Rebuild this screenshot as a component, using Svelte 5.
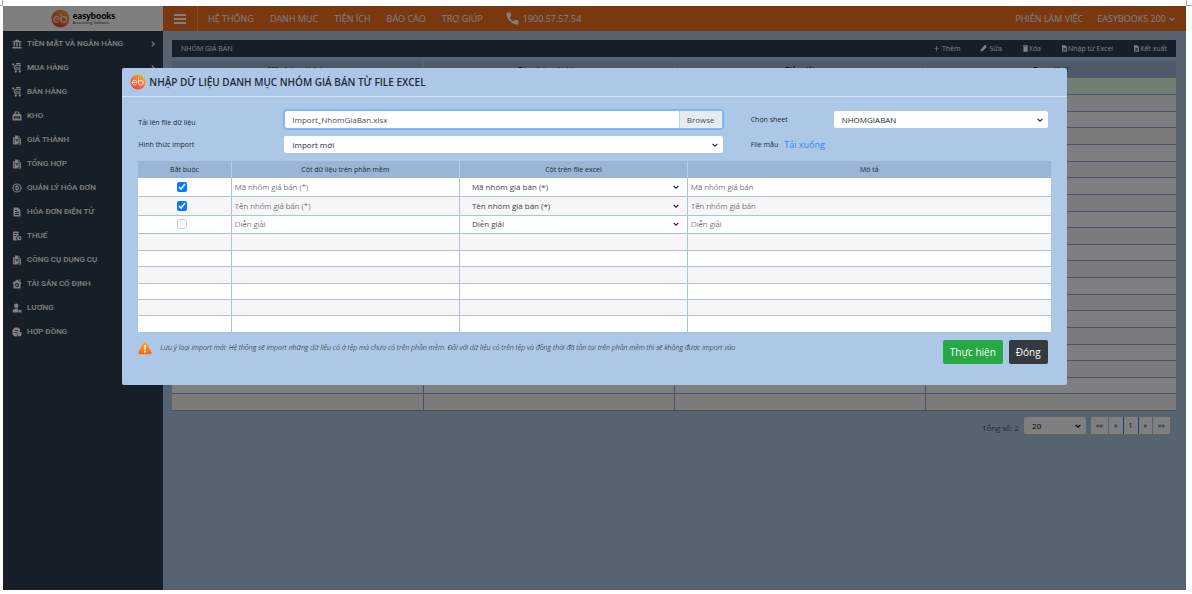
<script>
  const menus = ['HỆ THỐNG', 'DANH MỤC', 'TIỆN ÍCH', 'BÁO CÁO', 'TRỢ GIÚP'];
  const nav = [
    { label: 'TIỀN MẶT VÀ NGÂN HÀNG', icon: 'bank', more: true },
    { label: 'MUA HÀNG', icon: 'cart', more: true },
    { label: 'BÁN HÀNG', icon: 'cart', more: true },
    { label: 'KHO', icon: 'store', more: true },
    { label: 'GIÁ THÀNH', icon: 'files', more: true },
    { label: 'TỔNG HỢP', icon: 'files', more: true },
    { label: 'QUẢN LÝ HÓA ĐƠN', icon: 'globe', more: true },
    { label: 'HÓA ĐƠN ĐIỆN TỬ', icon: 'doc', more: true },
    { label: 'THUẾ', icon: 'tax', more: true },
    { label: 'CÔNG CỤ DỤNG CỤ', icon: 'files', more: true },
    { label: 'TÀI SẢN CỐ ĐỊNH', icon: 'house', more: true },
    { label: 'LƯƠNG', icon: 'user', more: true },
    { label: 'HỢP ĐỒNG', icon: 'contract', more: true }
  ];
  const tools = [
    { label: 'Thêm', icon: 'plus' },
    { label: 'Sửa', icon: 'pencil' },
    { label: 'Xóa', icon: 'trash' },
    { label: 'Nhập từ Excel', icon: 'sheet' },
    { label: 'Kết xuất', icon: 'sheet' }
  ];
  const listHeads = ['Mã nhóm giá bán', 'Tên nhóm giá bán', 'Diễn giải', 'Trạng thái'];
  const listRows = Array.from({ length: 20 }, (_, i) => i);
  const mapping = [
    { required: true, name: 'Mã nhóm giá bán (*)', note: 'Mã nhóm giá bán' },
    { required: true, name: 'Tên nhóm giá bán (*)', note: 'Tên nhóm giá bán' },
    { required: false, name: 'Diễn giải', note: 'Diễn giải' }
  ];
  const blanks = Array.from({ length: 6 }, (_, i) => i);
  const pages = ['««', '«', '1', '»', '»»'];
</script>

{#snippet logo()}
  <svg class="logo" viewBox="0 0 40 40" aria-hidden="true">
    <defs>
      <linearGradient id="ebg" x1="1" y1="0" x2="0.2" y2="1">
        <stop offset="0" stop-color="#fdc22e" />
        <stop offset="0.5" stop-color="#f8743a" />
        <stop offset="1" stop-color="#ee3a4b" />
      </linearGradient>
    </defs>
    <circle cx="20" cy="20" r="19" fill="url(#ebg)" />
    <g fill="none" stroke="#ffe6da" stroke-width="2.4" stroke-linecap="round">
      <path d="M6 21h11.500a6 6 0 1 0-2 5" />
      <path d="M21 10v13" />
      <circle cx="27" cy="22" r="6" />
    </g>
  </svg>
{/snippet}

{#snippet chevron()}
  <svg class="chev" viewBox="0 0 10 10" aria-hidden="true">
    <path d="M2 3.500 5 6.500 8 3.500" fill="none" stroke="currentColor" stroke-width="1.500" />
  </svg>
{/snippet}

{#snippet icon(name)}
  <svg class="ico" viewBox="0 0 20 20" fill="currentColor" aria-hidden="true">
    {#if name === 'bank'}
      <path d="M10 1 1 5.500V7h18V5.500zM3 8h3v7H3zM8.500 8h3v7h-3zM14 8h3v7h-3zM1 16h18v3H1z" />
    {:else if name === 'cart'}
      <path d="M0 1h4l2.500 10H17v2.500H5L2.500 3.500H0zM6 4h3v2H6zM10 4h3v2h-3zM14 4h4v2h-4zM7 7.500h3v2H7zM11 7.500h6v2h-6zM8 0h9v3H8z" />
      <circle cx="7.500" cy="17" r="2.300" /><circle cx="15.500" cy="17" r="2.300" />
    {:else if name === 'store'}
      <path fill-rule="evenodd" d="M6 1h8l1 4 4 3v11H1V8l4-3zM7.500 3v3h5V3zM4 10v6h12v-6zM5.500 11h9v1.500h-9zM5.500 14h9v1.500h-9z" />
    {:else if name === 'files'}
      <path fill-rule="evenodd" d="M2 4h3v13h6v2H2zM6 1h6v5h3v11H6zM8 8v1.500h5V8zM8 11v1.500h5V11z" />
      <path d="M13 1l4 4h-4zM16 7h2v12h-6v-1h4z" />
    {:else if name === 'globe'}
      <path fill-rule="evenodd" d="M10 1a9 9 0 1 0 0 18 9 9 0 0 0 0-18zm0 2a7 7 0 1 1 0 14 7 7 0 0 1 0-14z" />
      <path d="M9 4h2v2h2.500v2H8v1.200h5.500V14H11v2H9v-2H6.500v-2H12v-1H6.500V6H9z" />
      <path d="M0 9h4v2H0zM16 9h4v2h-4z" />
    {:else if name === 'doc'}
      <path fill-rule="evenodd" d="M3 1h9l5 5v13H3zM6 6h4v2H6zm0 4h8v2H6zm0 4h8v2H6z" />
    {:else if name === 'tax'}
      <path fill-rule="evenodd" d="M2 1h11v8a6 6 0 0 0-3 10H2zM4 4v1.500h7V4zm0 4v1.500h5V8z" />
      <path fill-rule="evenodd" d="M14.500 10a4.500 4.500 0 1 0 0 9 4.500 4.500 0 0 0 0-9zm-.7 2h1.500v2H17v1.500h-3.200z" />
    {:else if name === 'house'}
      <path fill-rule="evenodd" d="M10 1l9 7-1 2h-1v9H3v-9H2L1 8zM10 8a4 4 0 1 0 0 8 4 4 0 0 0 0-8zm0 2a2 2 0 1 1 0 4 2 2 0 0 1 0-4z" />
      <path d="M13 1h4v5z" />
    {:else if name === 'user'}
      <circle cx="8.500" cy="5.500" r="4.500" />
      <path d="M1 19c0-6 3-8 7.500-8 2 0 3.500.4 4.700 1.200L12 15v4zM13 14h6v5h-6z" />
    {:else if name === 'contract'}
      <path fill-rule="evenodd" d="M5 1h8l3 3v4l-5 5v6H5l-4-4V6zM6 6v1.500h6V6zM5 10v1.500h5V10z" />
      <path d="M14 9l5 2v5l-3 3-4-1v-5z" />
    {:else if name === 'plus'}
      <path d="M9 3h2v6h6v2h-6v6H9v-6H3V9h6z" />
    {:else if name === 'pencil'}
      <path d="M13 1h5v6L8 17l-7 2 2-7z" />
    {:else if name === 'trash'}
      <path d="M3 1h14v3H3zM4 5h12v14H4z" />
    {:else if name === 'sheet'}
      <path fill-rule="evenodd" d="M3 1h9l5 5v13H3zM6 8v2l2.500 2.500L6 15v2h2l2-2.500 2 2.500h2v-2l-2.500-2.500L14 10V8h-2l-2 2.500L8 8z" />
    {/if}
  </svg>
{/snippet}

<div class="sheet">
  <div class="marks"><span class="mark left"></span><span class="mark right"></span></div>

  <div class="app">
    <aside class="side">
      <div class="brand">
        {@render logo()}
        <div class="brand-text"><strong>easybooks</strong><small>Accounting Software</small></div>
      </div>
      <nav>
        {#each nav as item}
          <a href="#nav">
            {@render icon(item.icon)}
            <span>{item.label}</span>
            {#if item.more}
              <svg class="more" viewBox="0 0 10 10" aria-hidden="true">
                <path d="M3 1l4 4-4 4" fill="none" stroke="currentColor" stroke-width="2" />
              </svg>
            {/if}
          </a>
        {/each}
      </nav>
    </aside>

    <div class="main">
      <header class="top">
        <button class="burger" aria-label="Menu"><i></i><i></i><i></i></button>
        <nav class="menus">
          {#each menus as m}<a href="#menu">{m}</a>{/each}
        </nav>
        <a class="phone" href="#phone">
          <svg viewBox="0 0 24 24" fill="currentColor" aria-hidden="true">
            <path d="M5 1h2.500c.8 0 1.200.5 1.300 1.200.1 1.600.4 3 .8 4.300.2.600 0 1-.4 1.400L6.500 10.600a17 17 0 0 0 7 7l2.600-2.700c.4-.4.9-.5 1.400-.3 1.300.4 2.700.7 4.200.8.700 0 1.200.5 1.200 1.300v5c0 .8-.5 1.300-1.300 1.300C10.500 23 1 13.500 1 2.300 1 1.500 1.500 1 2.300 1z" />
          </svg>
          1900.57.57.54
        </a>
        <div class="session">
          <a href="#session">PHIÊN LÀM VIỆC</a>
          <a href="#account">EASYBOOKS 200 {@render chevron()}</a>
        </div>
      </header>

      <section class="content">
        <div class="toolbar">
          <h1>NHÓM GIÁ BÁN</h1>
          <div class="tools">
            {#each tools as t}
              <button class:spaced={t.icon === 'plus' || t.icon === 'pencil'}>{@render icon(t.icon)}{t.label}</button>
            {/each}
          </div>
        </div>

        <table class="list">
          <thead><tr>{#each listHeads as h}<th>{h}</th>{/each}</tr></thead>
          <tbody>
            {#each listRows as r}
              <tr>{#each listHeads as h}<td></td>{/each}</tr>
            {/each}
          </tbody>
        </table>

        <div class="pager">
          <label for="size">Tổng số: 2</label>
          <div class="pick size">
            <select id="size"><option>20</option></select>
            {@render chevron()}
          </div>
          <div class="pages">
            {#each pages as p}<button>{p}</button>{/each}
          </div>
        </div>
      </section>
    </div>

    <div class="backdrop">
      <div class="modal" role="dialog" aria-labelledby="title">
        <div class="modal-head">
          {@render logo()}
          <h2 id="title">NHẬP DỮ LIỆU DANH MỤC NHÓM GIÁ BÁN TỪ FILE EXCEL</h2>
        </div>

        <div class="modal-body">
          <div class="form">
            <label class="low" for="file">Tải lên file dữ liệu</label>
            <div class="file">
              <input id="file" type="text" readonly value="Import_NhomGiaBan.xlsx" />
              <button>Browse</button>
            </div>
            <label class="second" for="sheet">Chọn sheet</label>
            <div class="pick">
              <select id="sheet"><option>NHOMGIABAN</option></select>
              {@render chevron()}
            </div>

            <label for="mode">Hình thức import</label>
            <div class="pick">
              <select id="mode"><option>Import mới</option></select>
              {@render chevron()}
            </div>
            <div class="second sample"><span>File mẫu</span><a href="#download">Tải xuống</a></div>
          </div>

          <table class="map">
            <thead>
              <tr>
                <th class="c-req">Bắt buộc</th>
                <th class="c-col">Cột dữ liệu trên phần mềm</th>
                <th class="c-col">Cột trên file excel</th>
                <th>Mô tả</th>
              </tr>
            </thead>
            <tbody>
              {#each mapping as m}
                <tr class="filled">
                  <td class="check"><input type="checkbox" aria-label={m.name} checked={m.required} disabled={!m.required} /></td>
                  <td>{m.name}</td>
                  <td class="cell-pick">
                    <div class="pick plain">
                      <select aria-label={m.note}><option>{m.name}</option></select>
                      {@render chevron()}
                    </div>
                  </td>
                  <td>{m.note}</td>
                </tr>
              {/each}
              {#each blanks as b}
                <tr class="blank"><td></td><td></td><td></td><td></td></tr>
              {/each}
            </tbody>
          </table>

          <div class="foot">
            <svg class="warn" viewBox="0 0 28 28" aria-hidden="true">
              <defs>
                <linearGradient id="wg" x1="0" y1="0" x2="0" y2="1">
                  <stop offset="0" stop-color="#ffae2b" />
                  <stop offset="1" stop-color="#f4650e" />
                </linearGradient>
              </defs>
              <path d="M14 1.500c1.300 0 2.200.8 3 2.200l9.700 18.300c1.300 2.600.3 4.500-2.700 4.500H4c-3 0-4-1.900-2.700-4.500L11 3.700c.8-1.400 1.700-2.200 3-2.200z" fill="url(#wg)" />
              <path d="M12.200 8h3.600l-.6 10h-2.400z" fill="#fff" />
              <circle cx="14" cy="21.500" r="1.900" fill="#fff" />
            </svg>
            <p>Lưu ý loại import mới: Hệ thống sẽ import những dữ liệu có ở tệp mà chưa có trên phần mềm. Đối với dữ liệu có trên tệp và đồng thời đã tồn tại trên phần mềm thì sẽ không được import vào</p>
            <div class="actions">
              <button class="go">Thực hiện</button>
              <button class="close">Đóng</button>
            </div>
          </div>
        </div>
      </div>
    </div>
  </div>
</div>

<style>
  :global(body) { background: #fff; }
  * { box-sizing: border-box; }
  .sheet {
    display: flex;
    flex-direction: column;
    min-height: 100vh;
    padding-bottom: 4px;
    font: 9px/12px "Open Sans", "Noto Sans", sans-serif;
  }
  a { color: inherit; text-decoration: none; }
  button, input, select { font: inherit; color: inherit; margin: 0; border: 0; padding: 0; }
  button { background: none; cursor: pointer; }
  h1, h2, p { margin: 0; font: inherit; }
  svg { display: block; flex: none; }

  .marks { display: flex; justify-content: space-between; height: 6px; }
  .mark { height: 6px; border-bottom: 1px solid #a6a6a6; }
  .mark.left { width: 3px; border-right: 1px solid #a6a6a6; }
  .mark.right { width: 6px; border-left: 1px solid #a6a6a6; }

  .app { position: relative; flex: 1; display: flex; margin: 0 6px 0 3px; background: #b0c6e4; }

  .side { width: 160px; flex: none; background: #2c3c4e; color: #fff; }
  .brand { display: flex; align-items: center; justify-content: center; gap: 3px; height: 25px; background: #fff; color: #000; }
  .logo { width: 19px; height: 19px; }
  .brand-text { display: flex; flex-direction: column; font-family: Lato, sans-serif; }
  .brand-text strong { font-size: 9px; line-height: 9px; font-weight: 900; }
  .brand-text small { font-size: 4px; line-height: 6px; color: #444; }
  .side nav { padding-top: 1px; }
  .side nav a {
    display: flex;
    align-items: center;
    gap: 5px;
    height: 24px;
    padding: 0 7px 0 9px;
    font: 500 8px/12px Roboto, sans-serif;
  }
  .side nav span { flex: 1; }
  .ico { width: 10px; height: 10px; }
  .more { width: 6px; height: 6px; }

  .main { flex: 1; min-width: 0; }
  .top { display: flex; align-items: center; height: 25px; background: #f47020; color: #fff; }
  .burger { display: flex; flex-direction: column; gap: 2px; padding: 0 11px; height: 25px; justify-content: center; border-right: 1px solid #f99a5c; }
  .burger i { width: 12px; height: 2px; background: #fff; }
  .menus { display: flex; gap: 16px; padding: 0 23px 0 10px; }
  .phone { display: flex; align-items: center; gap: 4px; }
  .phone svg { width: 13px; height: 13px; }
  .session { display: flex; gap: 14px; margin-left: auto; padding-right: 10px; }
  .session a { display: flex; align-items: center; gap: 2px; }
  .chev { width: 8px; height: 8px; }

  .content { padding: 9px 10px 0 9px; }
  .toolbar { display: flex; align-items: center; justify-content: space-between; height: 17px; margin-bottom: 4px; padding: 0 9px; background: #2c3c4e; color: #fff; font-size: 7px; }
  .tools { display: flex; gap: 20px; }
  .tools button { display: flex; align-items: center; }
  .tools button.spaced { gap: 2px; }
  .tools .ico { width: 7px; height: 7px; }

  table { width: 100%; table-layout: fixed; border-collapse: collapse; }
  th, td { padding: 0; }
  .list { height: 350px; }
  .list tr { height: 16px; }
  .list th { height: 17px; background: #9ab5d4; font-size: 7px; font-weight: 600; line-height: 10px; border-right: 1px solid #abc7e6; }
  .list td { border: 1px solid #8aa6cc; border-width: 0 1px 1px 0; }
  .list th:last-child, .list td:last-child { border-right: 0; }
  .list tbody tr { background: #fff; }
  .list tbody tr:nth-child(even) { background: #f6f6f6; }
  .list tbody tr:first-child { background: #dffee4; }

  .pager { display: flex; align-items: flex-end; justify-content: flex-end; gap: 5px; margin-top: 6px; padding-right: 6px; font-size: 8px; }
  .pager label { font-weight: 300; }
  .size { width: 62px; }
  .pages { display: flex; gap: 1px; background: #b0c6e4; }
  .pages button { padding: 0 5px; height: 17px; background: #fff; font-size: 7px; }
  .pages button:nth-child(3) { box-shadow: -1px 0 #2a7fe8, 1px 0 #2a7fe8; }

  .pick { display: grid; align-items: center; height: 17px; }
  .pick select {
    grid-area: 1 / 1;
    width: 100%;
    height: 17px;
    padding: 0 8px;
    appearance: none;
    background: #fff;
    border-radius: 2px;
    font-size: 8px;
  }
  .pick .chev { grid-area: 1 / 1; justify-self: end; margin-right: 4px; pointer-events: none; }

  .backdrop { position: absolute; inset: 0; padding-top: 62px; background: rgba(0, 0, 0, 0.5); }
  .modal { width: calc(80% - 2px); min-height: 317px; margin: 0 auto; background: #adc8e6; border-radius: 2px; color: #212a35; }
  .modal-head { display: flex; align-items: center; gap: 3px; height: 29px; padding: 0 8px; border-bottom: 1px solid #d5e5f6; }
  .modal-head .logo { width: 16px; height: 16px; }
  .modal-head h2 { font-size: 10px; font-weight: 600; }
  .modal-body { padding: 13px 16px 0; }

  .form { display: grid; grid-template-columns: 146px 1fr 111px 214px; row-gap: 7px; align-items: center; padding-right: 3px; margin-bottom: 8px; }
  .form label, .sample span { font-size: 7px; font-weight: 400; }
  .form .low { align-self: end; }
  .second { padding-left: 28px; }
  .file { display: flex; height: 19px; border: 1px solid #80bdff; border-radius: 3px; background: #fff; box-shadow: 0 0 0 1px #7fb0ee; color: #495057; font-size: 8px; }
  .file input { flex: 1; min-width: 0; padding: 0 7px; background: none; outline: 0; }
  .file button { width: 43px; background: #e9ecef; border-left: 1px solid #bcd6f3; }
  .sample { display: flex; align-items: center; gap: 6px; grid-column: 3 / 5; }
  .sample a { font-size: 9px; color: #2a85f5; }

  .map th { height: 17px; background: #9ab5d5; font-size: 7px; font-weight: 400; line-height: 10px; border-right: 1px solid #b4cdea; }
  .map th:last-child, .map td:last-child { border-right: 0; }
  .map td { padding: 0 3px; border: 1px solid #a9c3e4; border-width: 0 1px 1px 0; color: #222; font-weight: 300; font-size: 8px; }
  .map { height: 172px; margin-bottom: 7px; }
  .map tbody tr { background: #fff; }
  .map tbody tr:nth-child(even) { background: #f6f6f6; }
  .c-req { width: 93px; }
  .c-col { width: 25%; }
  .filled { height: 18px; }
  .blank { height: 16px; }
  .map .check { line-height: 0; padding-right: 8px; text-align: center; }
  .check input { width: 10px; height: 10px; accent-color: #007bff; }
  .map .cell-pick { padding: 0; font-weight: 400; }
  .plain, .plain select { height: 16px; }
  .plain select { padding: 0 12px; background: none; color: #444; }
  .plain .chev { margin-right: 7px; }

  .foot { display: flex; align-items: flex-start; gap: 8px; padding-right: 3px; }
  .warn { width: 14px; height: 14px; margin-top: 1px; }
  .foot p { flex: 1; margin-top: 2px; font-size: 7px; font-style: italic; font-weight: 300; color: #000; }
  .actions { display: flex; gap: 6px; }
  .actions button { height: 24px; padding: 0 7px; border-radius: 2px; color: #fff; font-size: 10px; }
  .go { background: #28a745; }
  .close { background: #343a40; }
</style>
